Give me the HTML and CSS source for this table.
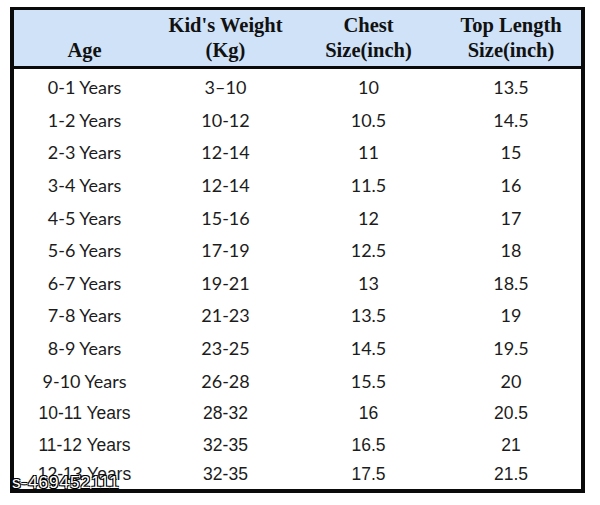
FILE: index.html
```html
<!DOCTYPE html>
<html>
<head>
<meta charset="utf-8">
<link rel="stylesheet" href="styles.css">
</head>
<body>
<div class="page">
  <div class="chart">
    <div class="head">
      <div class="hcell">Age</div>
      <div class="hcell">Kid's Weight<br>(Kg)</div>
      <div class="hcell">Chest<br>Size(inch)</div>
      <div class="hcell">Top Length<br>Size(inch)</div>
    </div>
    <div class="body">
      <div class="row"><span>0-1 Years</span><span>3–10</span><span>10</span><span>13.5</span></div>
      <div class="row"><span>1-2 Years</span><span>10-12</span><span>10.5</span><span>14.5</span></div>
      <div class="row"><span>2-3 Years</span><span>12-14</span><span>11</span><span>15</span></div>
      <div class="row"><span>3-4 Years</span><span>12-14</span><span>11.5</span><span>16</span></div>
      <div class="row"><span>4-5 Years</span><span>15-16</span><span>12</span><span>17</span></div>
      <div class="row"><span>5-6 Years</span><span>17-19</span><span>12.5</span><span>18</span></div>
      <div class="row"><span>6-7 Years</span><span>19-21</span><span>13</span><span>18.5</span></div>
      <div class="row"><span>7-8 Years</span><span>21-23</span><span>13.5</span><span>19</span></div>
      <div class="row"><span>8-9 Years</span><span>23-25</span><span>14.5</span><span>19.5</span></div>
      <div class="row"><span>9-10 Years</span><span>26-28</span><span>15.5</span><span>20</span></div>
      <div class="row arial"><span>10-11 Years</span><span>28-32</span><span>16</span><span>20.5</span></div>
      <div class="row arial short"><span>11-12 Years</span><span>32-35</span><span>16.5</span><span>21</span></div>
      <div class="row arial last"><span>12-13 Years</span><span>32-35</span><span>17.5</span><span>21.5</span></div>
    </div>
    <div class="watermark">s-469452111</div>
  </div>
</div>
</body>
</html>
```
FILE: styles.css
```css
html, body {
  margin: 0;
  padding: 0;
  background: #ffffff;
}
.page {
  width: 600px;
  height: 505px;
  padding: 7px 0 0 10px;
  box-sizing: border-box;
}
.chart {
  position: relative;
  width: 575px;
  height: 486px;
  box-sizing: border-box;
  border-style: solid;
  border-color: #0a0a0a;
  border-width: 3px 4px 4px 4px;
  display: flex;
  flex-direction: column;
}
.head {
  height: 56px;
  flex: none;
  background: #cfe2f7;
  border-bottom: 3px solid #0a0a0a;
  display: grid;
  grid-template-columns: 141px 141px 145px 140px;
  font-family: "Liberation Serif", "Times New Roman", serif;
  font-weight: bold;
  font-size: 20.5px;
  line-height: 25px;
  color: #111111;
}
.hcell {
  display: flex;
  align-items: flex-end;
  justify-content: center;
  text-align: center;
  padding-bottom: 3px;
}
.body {
  flex: 1;
  display: flex;
  flex-direction: column;
  padding-top: 2px;
}
.row {
  height: 32.6px;
  flex: none;
  display: grid;
  grid-template-columns: 141px 141px 145px 140px;
  align-items: center;
  font-family: Lato, "Liberation Sans", sans-serif;
  font-size: 18px;
  color: #1c1c1c;
}
.row span {
  text-align: center;
}
.row.arial {
  font-family: "Liberation Sans", Arial, sans-serif;
  font-size: 17.5px;
}
.row.short {
  height: 31px;
}
.row.last {
  flex: 1;
  height: auto;
}
.watermark {
  position: absolute;
  left: -2px;
  bottom: -4px;
  font-family: "Liberation Sans", Arial, sans-serif;
  font-size: 17px;
  color: #ffffff;
  letter-spacing: 1px;
  text-shadow: -1px -1px 0 #000, 1px -1px 0 #000, -1px 1px 0 #000, 1px 1px 0 #000;
}
```
